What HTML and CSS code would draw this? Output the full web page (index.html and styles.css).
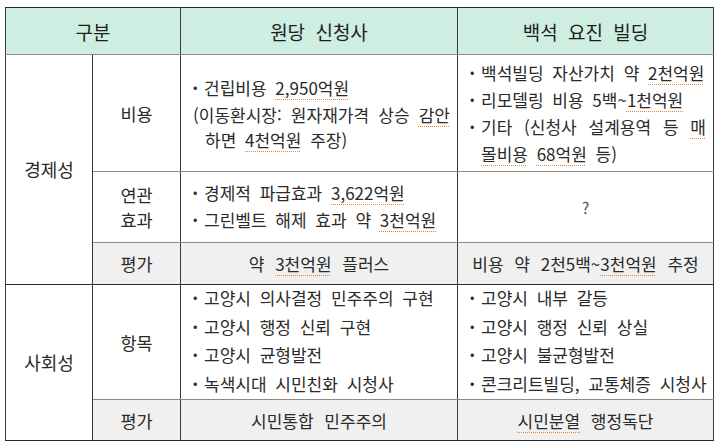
FILE: index.html
```html
<!DOCTYPE html>
<html lang="ko">
<head>
<meta charset="utf-8">
<link rel="stylesheet" href="styles.css">
</head>
<body>
<table class="cmp">
  <colgroup>
    <col class="c1"><col class="c2"><col class="c3"><col class="c4">
  </colgroup>
  <thead>
    <tr class="hd">
      <th colspan="2">구분</th>
      <th>원당 신청사</th>
      <th>백석 요진 빌딩</th>
    </tr>
  </thead>
  <tbody>
    <tr class="r-cost">
      <td rowspan="3" class="cat">경제성</td>
      <td class="sub">비용</td>
      <td class="lst">
        <div class="ln"><span class="bl">•</span><span class="tx">건립비용 <span class="sp">2,950억원</span></span></div>
        <div class="ln jf"><span class="tx">(이동환시장: 원자재가격 상승 <span class="sp">감안</span></span></div>
        <div class="ln"><span class="tx in1">하면 <span class="sp">4천억원</span> 주장)</span></div>
      </td>
      <td class="lst">
        <div class="ln"><span class="bl">•</span><span class="tx">백석빌딩 자산가치 약 <span class="sp">2천억원</span></span></div>
        <div class="ln"><span class="bl">•</span><span class="tx">리모델링 비용 5백~<span class="sp">1천억원</span></span></div>
        <div class="ln jf"><span class="bl">•</span><span class="tx">기타 (신청사 설계용역 등 <span class="sp">매</span></span></div>
        <div class="ln"><span class="bl"></span><span class="tx"><span class="sp">몰비용</span> <span class="sp">68억원</span> 등)</span></div>
      </td>
    </tr>
    <tr class="r-eff">
      <td class="sub">연관<br>효과</td>
      <td class="lst">
        <div class="ln"><span class="bl">•</span><span class="tx">경제적 파급효과 <span class="sp">3,622억원</span></span></div>
        <div class="ln"><span class="bl">•</span><span class="tx">그린벨트 해제 효과 약 <span class="sp">3천억원</span></span></div>
      </td>
      <td class="ctr q">?</td>
    </tr>
    <tr class="r-eval gray">
      <td class="sub">평가</td>
      <td class="ctr">약 <span class="sp">3천억원</span> 플러스</td>
      <td class="ctr">비용 약 2천5백~<span class="sp">3천억원</span> 추정</td>
    </tr>
    <tr class="r-item">
      <td rowspan="2" class="cat">사회성</td>
      <td class="sub">항목</td>
      <td class="lst tall">
        <div class="ln"><span class="bl">•</span><span class="tx">고양시 의사결정 민주주의 구현</span></div>
        <div class="ln"><span class="bl">•</span><span class="tx">고양시 행정 신뢰 구현</span></div>
        <div class="ln"><span class="bl">•</span><span class="tx">고양시 균형발전</span></div>
        <div class="ln"><span class="bl">•</span><span class="tx">녹색시대 시민친화 시청사</span></div>
      </td>
      <td class="lst tall">
        <div class="ln"><span class="bl">•</span><span class="tx">고양시 내부 갈등</span></div>
        <div class="ln"><span class="bl">•</span><span class="tx">고양시 행정 신뢰 상실</span></div>
        <div class="ln"><span class="bl">•</span><span class="tx">고양시 불균형발전</span></div>
        <div class="ln"><span class="bl">•</span><span class="tx">콘크리트빌딩, 교통체증 시청사</span></div>
      </td>
    </tr>
    <tr class="r-eval2 gray">
      <td class="sub">평가</td>
      <td class="ctr">시민통합 민주주의</td>
      <td class="ctr"><span class="sp">시민분열</span> 행정독단</td>
    </tr>
  </tbody>
</table>
</body>
</html>
```
FILE: styles.css
```css
html, body {
  margin: 0;
  padding: 0;
  background: #ffffff;
}
body {
  padding: 7px 0 0 5px;
  font-family: "Noto Sans CJK KR", "Noto Sans", sans-serif;
  color: #2a2a2a;
}
.cmp {
  border-collapse: collapse;
  table-layout: fixed;
  width: 708px;
  border: 1px solid #2b2b2b;
}
.c1 { width: 87px; }
.c2 { width: 88px; }
.c3 { width: 277px; }
.c4 { width: 256px; }

.cmp th, .cmp td {
  border-left: 1px solid #3a3a3a;
  border-right: 1px solid #3a3a3a;
  border-top: 1px solid #8a8a8a;
  border-bottom: 1px solid #8a8a8a;
  padding: 0;
  font-size: 17px;
  word-spacing: 4px;
  line-height: 25px;
  vertical-align: middle;
}
.cmp .hd th {
  background: #cdeee1;
  height: 46px;
  font-weight: normal;
  font-size: 19px;
  color: #1e1e1e;
  text-align: center;
  word-spacing: 5px;
  border-top: 1px solid #2b2b2b;
}
.cmp td.cat, .cmp td.sub, .cmp td.ctr { text-align: center; }
.cmp td.cat { border-bottom: 1px solid #2b2b2b; font-size: 18px; }
.cmp td.sub { font-size: 17.5px; }
.cmp td.ctr { word-spacing: 6px; }
.r-cost td { height: 116px; }
.r-eff td { height: 70px; }
.r-eval td { height: 41px; }
.r-item td { height: 114px; }
.r-eval2 td { height: 40px; }
.cmp .r-eval td, .cmp .r-eval2 td { border-bottom: 1px solid #2b2b2b; }
.cmp .gray td { background: #f0f0f0; }
.cmp .gray td.cat { background: #ffffff; }

.cmp td.lst { padding: 0 7px 0 12px; }
.lst.tall .ln { line-height: 26.5px; }
.ln { display: flex; align-items: baseline; white-space: nowrap; }
.bl {
  flex: none;
  width: 11px;
  font-size: 13px;
  transform: translateY(-3px);
}
.tx { flex: 1; }
.in1 { padding-left: 12px; }
.jf .tx { text-align: justify; text-align-last: justify; }
.cmp td.q { font-size: 16px; color: #555; }

.sp {
  text-decoration: underline dotted #e0893c;
  text-decoration-thickness: 1px;
  text-underline-offset: 4px;
}
```
